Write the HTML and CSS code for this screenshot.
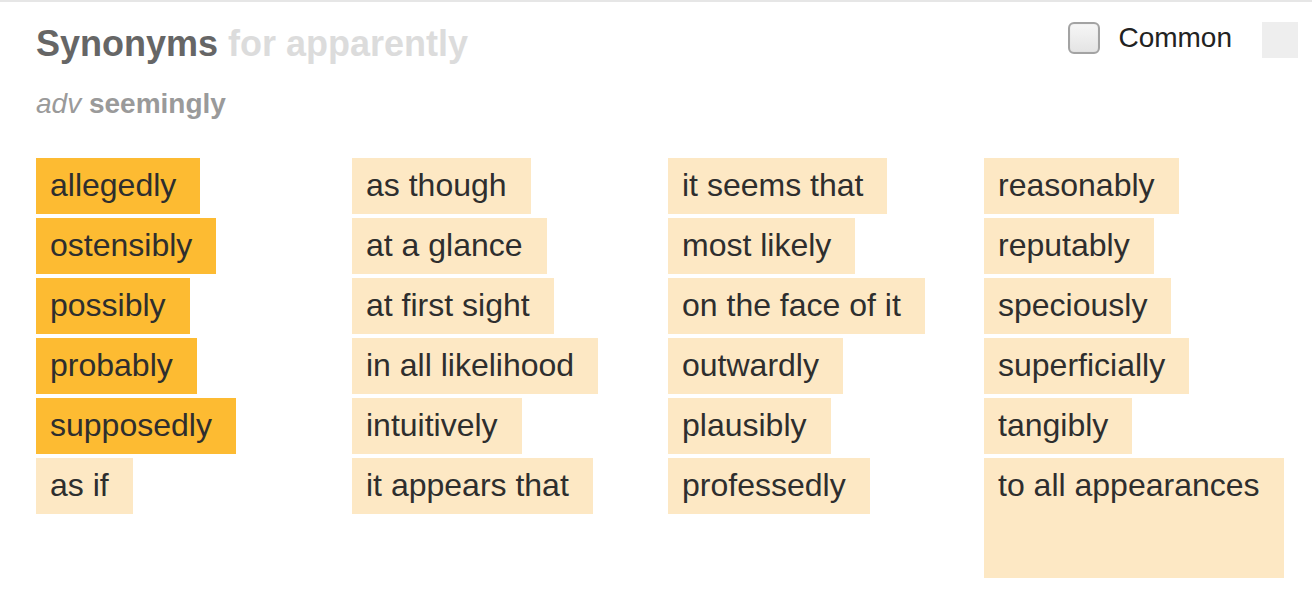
FILE: index.html
```html
<!DOCTYPE html>
<html lang="en">
<head>
<meta charset="utf-8">
<title>Synonyms for apparently</title>
<link rel="stylesheet" href="styles.css">
</head>
<body>
<section class="panel">
  <header class="head">
    <h1 class="title"><span class="title-main">Synonyms</span> <span class="title-for">for apparently</span></h1>
    <div class="controls">
      <label class="common"><span class="box"></span><span class="common-text">Common</span></label>
      <span class="square"></span>
    </div>
  </header>
  <p class="sense"><em class="pos">adv</em> <strong class="gloss">seemingly</strong></p>
  <div class="grid">
    <ul class="col">
      <li class="syn strong">allegedly</li>
      <li class="syn strong">ostensibly</li>
      <li class="syn strong">possibly</li>
      <li class="syn strong">probably</li>
      <li class="syn strong">supposedly</li>
      <li class="syn">as if</li>
    </ul>
    <ul class="col">
      <li class="syn">as though</li>
      <li class="syn">at a glance</li>
      <li class="syn">at first sight</li>
      <li class="syn">in all likelihood</li>
      <li class="syn">intuitively</li>
      <li class="syn">it appears that</li>
    </ul>
    <ul class="col">
      <li class="syn">it seems that</li>
      <li class="syn">most likely</li>
      <li class="syn">on the face of it</li>
      <li class="syn">outwardly</li>
      <li class="syn">plausibly</li>
      <li class="syn">professedly</li>
    </ul>
    <ul class="col">
      <li class="syn">reasonably</li>
      <li class="syn">reputably</li>
      <li class="syn">speciously</li>
      <li class="syn">superficially</li>
      <li class="syn">tangibly</li>
      <li class="syn tall">to all appearances</li>
    </ul>
  </div>
</section>
</body>
</html>
```

FILE: styles.css
```css
html, body {
  margin: 0;
  padding: 0;
  background: #fff;
}

body {
  font-family: "Liberation Sans", Arial, Helvetica, sans-serif;
  border-top: 2px solid #e6e6e6;
}

.panel {
  padding: 20px 14px 0 36px;
}

.head {
  display: flex;
  justify-content: space-between;
  align-items: flex-start;
}

.title {
  margin: 0;
  font-size: 36px;
  line-height: 44px;
  font-weight: bold;
}

.title-main {
  color: #666;
}

.title-for {
  color: #dcdcdc;
}

.controls {
  display: flex;
  align-items: flex-start;
}

.common {
  display: flex;
  align-items: flex-start;
}

.box {
  width: 28px;
  height: 28px;
  border: 2px solid #a3a3a3;
  border-radius: 6px;
  background: linear-gradient(#f6f6f6, #e4e4e4);
  box-shadow: inset 0 0 1px #ccc;
  margin-right: 18px;
}

.common-text {
  font-size: 28px;
  line-height: 32px;
  color: #222;
}

.square {
  width: 36px;
  height: 36px;
  background: #eeeeee;
  margin-left: 30px;
}

.sense {
  margin: 23px 0 0;
  font-size: 28px;
  line-height: 30px;
  color: #9a9a9a;
}

.pos {
  font-style: italic;
}

.gloss {
  font-weight: bold;
}

.grid {
  display: grid;
  grid-template-columns: repeat(4, 300px);
  column-gap: 16px;
  margin-top: 39px;
}

.col {
  list-style: none;
  margin: 0;
  padding: 0;
  display: flex;
  flex-direction: column;
  align-items: flex-start;
  gap: 4px;
}

.syn {
  box-sizing: border-box;
  height: 56px;
  line-height: 54px;
  padding: 0 24px 0 14px;
  font-size: 32px;
  color: #2e2e2e;
  background: #fde8c4;
  white-space: nowrap;
}

.syn.strong {
  background: #fdbb32;
}

.syn.tall {
  height: 120px;
  align-self: stretch;
}
```
